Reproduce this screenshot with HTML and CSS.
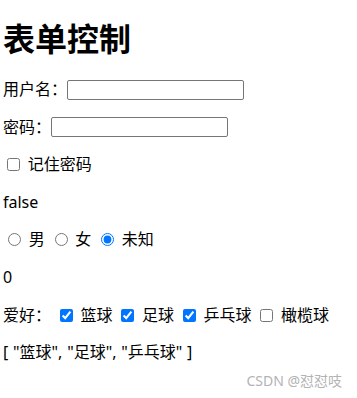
FILE: index.html
```html
<!DOCTYPE html>
<html lang="zh">
<head>
<meta charset="utf-8">
<link rel="stylesheet" href="styles.css">
</head>
<body>
<div class="app">
  <h1 class="title">表单控制</h1>
  <div class="rows">
    <p class="row">用户名：<input class="field field-user" type="text"></p>
    <p class="row">密码：<input class="field field-pass" type="password"></p>
    <p class="row"><input class="box" type="checkbox"> 记住密码</p>
    <p class="row">false</p>
    <p class="row"><input class="radio" type="radio" name="sex"> 男 <input class="radio" type="radio" name="sex"> 女 <input class="radio" type="radio" name="sex" checked> 未知</p>
    <p class="row">0</p>
    <p class="row">爱好： <input class="box" type="checkbox" checked> 篮球 <input class="box" type="checkbox" checked> 足球 <input class="box" type="checkbox" checked> 乒乓球 <input class="box" type="checkbox"> 橄榄球</p>
    <p class="row">[ "篮球", "足球", "乒乓球" ]</p>
  </div>
</div>
<div class="watermark">CSDN @怼怼吱</div>
</body>
</html>
```
FILE: styles.css
```css
html, body {
  margin: 0;
  padding: 0;
  background: #fff;
}
body {
  font-family: "Noto Sans", "Noto Sans CJK SC", sans-serif;
  font-size: 16px;
  color: #000;
  position: relative;
  height: 398px;
  overflow: hidden;
}
.app {
  padding: 0 3px;
}
.title {
  font-size: 32px;
  line-height: 40px;
  font-weight: bold;
  margin: 17px 0 21px;
  font-family: "Noto Sans CJK SC", sans-serif;
}
.rows {
  display: flex;
  flex-direction: column;
  gap: 15.6px;
}
.row {
  margin: 0;
  height: 22px;
  line-height: 22px;
  white-space: nowrap;
  word-spacing: 0.6px;
}
.field {
  box-sizing: border-box;
  height: 20px;
  border: 1px solid #767676;
  border-radius: 2px;
  padding: 1px 2px;
  vertical-align: middle;
  margin: -2px 0 0 0;
}
.field-user { width: 177px; }
.field-pass { width: 177px; }
.box {
  width: 13px;
  height: 13px;
  margin: 3px 3px 3px 4px;
  vertical-align: -1px;
  accent-color: #0075ff;
}
.radio {
  width: 13px;
  height: 13px;
  margin: 3px 3px 0 5px;
  vertical-align: -1px;
  accent-color: #0075ff;
}
.watermark {
  position: absolute;
  right: 15px;
  top: 371px;
  font-size: 14px;
  line-height: 20px;
  color: #b3b3b3;
  font-family: "Noto Sans", "Noto Sans CJK SC", sans-serif;
}
```
